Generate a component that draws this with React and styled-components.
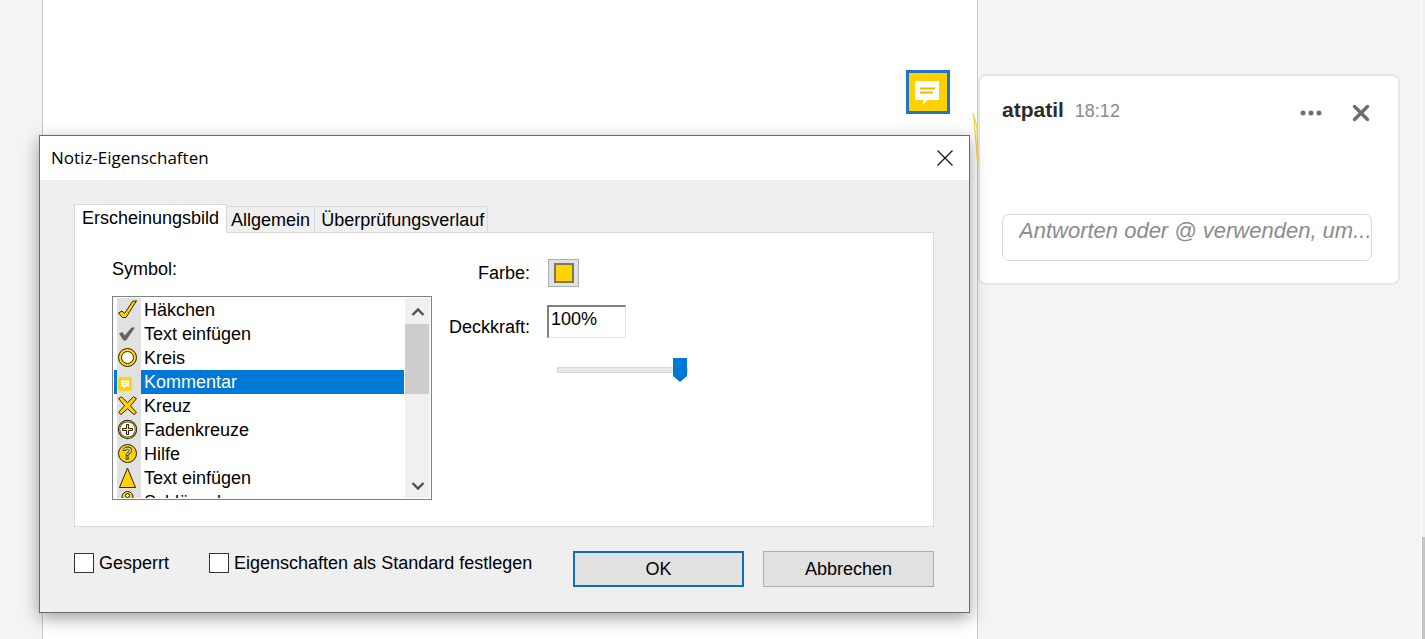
import { useState } from "react";
import styled, { createGlobalStyle } from "styled-components";

const symbols = [
  { id: "check", label: "Häkchen" },
  { id: "insert", label: "Text einfügen" },
  { id: "circle", label: "Kreis" },
  { id: "comment", label: "Kommentar" },
  { id: "cross", label: "Kreuz" },
  { id: "crosshair", label: "Fadenkreuze" },
  { id: "help", label: "Hilfe" },
  { id: "triangle", label: "Text einfügen" },
  { id: "key", label: "Schlüssel" },
];

const tabs = ["Erscheinungsbild", "Allgemein", "Überprüfungsverlauf"];

const shapes = {
  check: (
    <path
      d="M1.5 15 L5 13 L7.5 15.5 L15.5 3.5 L19.5 2.8 L9 19.5 H5.5 Z"
      fill="#ffd400"
      stroke="#2b2300"
    />
  ),
  insert: (
    <path d="M2 11.5 L5.5 10 L7.8 13.5 L14.5 5.5 H18 L9 18.5 H6.5 Z" fill="#636363" />
  ),
  circle: (
    <>
      <circle cx="10.5" cy="11.5" r="9" fill="#ffd400" stroke="#2b2300" />
      <circle cx="10.5" cy="11.5" r="6" fill="#fff" stroke="#2b2300" />
    </>
  ),
  comment: (
    <>
      <rect x="1" y="7" width="14" height="14" rx="1" fill="#ffd21a" />
      <path d="M4 10.5 H12 V16.5 H8.5 L7 18 V16.5 H4 Z" fill="#fff" />
      <path d="M6 12.5 H10 M6 14.5 H9" stroke="#ffd95a" />
    </>
  ),
  cross: (
    <path
      d="M1.5 4.5 L4.5 2.8 L10.5 8.7 L16.5 2.8 L19.5 4.5 L13.5 11.8 L19.5 18.5 L17 20.5 L10.5 14.8 L4 20.5 L1.5 18.5 L7.5 11.8 Z"
      fill="#ffd400"
      stroke="#2b2300"
      strokeLinejoin="round"
    />
  ),
  crosshair: (
    <>
      <circle cx="10.5" cy="11.5" r="8.5" fill="#fff" stroke="#2b2300" strokeWidth="2.4" />
      <circle cx="10.5" cy="11.5" r="8.3" fill="none" stroke="#d9b300" strokeWidth="1" />
      <path
        d="M9.5 6.5 H11.5 V10.5 H15.5 V12.5 H11.5 V16.5 H9.5 V12.5 H5.5 V10.5 H9.5 Z"
        fill="#ffe680"
        stroke="#2b2300"
      />
    </>
  ),
  help: (
    <>
      <circle cx="10.5" cy="11.5" r="9" fill="#ffd400" stroke="#2b2300" />
      <text
        x="10.5"
        y="17"
        textAnchor="middle"
        fontFamily="Liberation Sans, sans-serif"
        fontSize="16"
        fontWeight="bold"
        fill="#fff"
        stroke="#2b2300"
        strokeWidth="0.8"
      >
        ?
      </text>
    </>
  ),
  triangle: (
    <path d="M10.5 2 L18.5 21.5 H2.5 Z" fill="#ffd400" stroke="#2b2300" />
  ),
  key: (
    <>
      <circle cx="10.5" cy="7" r="5.5" fill="#ffd400" stroke="#2b2300" />
      <circle cx="10.5" cy="5.5" r="2" fill="#fff" stroke="#2b2300" />
      <path d="M8.5 12 H12.5 V21 H8.5 Z" fill="#ffd400" stroke="#2b2300" />
    </>
  ),
};

function App() {
  const [activeTab, setActiveTab] = useState(tabs[0]);
  const [symbol, setSymbol] = useState("comment");
  const [opacity, setOpacity] = useState(100);

  return (
    <>
      <GlobalStyle />
      <Workspace>
        <DocumentPage>
          <NoteMarker aria-label="Notiz">
            <svg width="38" height="38" viewBox="0 0 38 38">
              <path d="M6 8 H30 V27 H18.5 L14 32 V27 H6 Z" fill="#fff" />
              <path d="M11 15.5 H26 M11 19.5 H24" stroke="#e9b800" strokeWidth="2" />
            </svg>
          </NoteMarker>
        </DocumentPage>

        <Comments>
          <CommentCard>
            <CommentHeader>
              <Author>atpatil</Author>
              <Time>18:12</Time>
              <CardActions>
                <IconButton aria-label="Optionen">
                  <svg width="22" height="22" viewBox="0 0 22 22" fill="#6e6e6e">
                    <circle cx="3" cy="11" r="2.5" />
                    <circle cx="11" cy="11" r="2.5" />
                    <circle cx="19" cy="11" r="2.5" />
                  </svg>
                </IconButton>
                <IconButton aria-label="Schließen">
                  <svg width="18" height="18" viewBox="0 0 18 18">
                    <path
                      d="M2.5 2.5 L15.5 15.5 M15.5 2.5 L2.5 15.5"
                      stroke="#6e6e6e"
                      strokeWidth="3.4"
                      strokeLinecap="round"
                    />
                  </svg>
                </IconButton>
              </CardActions>
            </CommentHeader>
            <ReplyInput
              aria-label="Antwort"
              placeholder="Antworten oder @ verwenden, um..."
            />
          </CommentCard>
        </Comments>

        <Scroller>
          <ScrollerThumb />
        </Scroller>

        <Connector width="8" height="56" viewBox="0 0 8 56">
          <path
            d="M1 1 L6 19 M1.5 2 L6 54 M5 15 L6 54"
            fill="none"
            stroke="#f5d13c"
            strokeWidth="1.2"
          />
        </Connector>

        <Dialog role="dialog" aria-labelledby="dialog-title">
          <TitleBar>
            <Title id="dialog-title">Notiz-Eigenschaften</Title>
            <IconButton aria-label="Dialog schließen">
              <svg width="16" height="16" viewBox="0 0 16 16">
                <path d="M0.5 0.5 L15.5 15.5 M15.5 0.5 L0.5 15.5" stroke="#111" strokeWidth="1.2" />
              </svg>
            </IconButton>
          </TitleBar>

          <DialogBody>
            <TabList role="tablist">
              {tabs.map((tab) => (
                <Tab
                  key={tab}
                  role="tab"
                  aria-selected={activeTab === tab}
                  $active={activeTab === tab}
                  onClick={() => setActiveTab(tab)}
                >
                  {tab}
                </Tab>
              ))}
            </TabList>

            <Panel role="tabpanel">
              <SymbolField>
                <span id="symbol-label">Symbol:</span>
                <ListBox>
                  <Options role="listbox" aria-labelledby="symbol-label">
                    {symbols.map((item) => (
                      <Option
                        key={item.id}
                        role="option"
                        aria-selected={symbol === item.id}
                        $selected={symbol === item.id}
                        onClick={() => setSymbol(item.id)}
                      >
                        <IconCell>
                          <svg width="24" height="24" viewBox="0 0 24 24">
                            {shapes[item.id]}
                          </svg>
                        </IconCell>
                        {item.label}
                      </Option>
                    ))}
                  </Options>
                  <ListScrollbar>
                    <ScrollButton aria-label="Nach oben">
                      <svg width="14" height="10" viewBox="0 0 14 10">
                        <path d="M1.5 8 L7 2.5 L12.5 8" fill="none" stroke="#505050" strokeWidth="2.4" />
                      </svg>
                    </ScrollButton>
                    <ListThumb />
                    <ScrollButton aria-label="Nach unten">
                      <svg width="14" height="10" viewBox="0 0 14 10">
                        <path d="M1.5 2 L7 7.5 L12.5 2" fill="none" stroke="#505050" strokeWidth="2.4" />
                      </svg>
                    </ScrollButton>
                  </ListScrollbar>
                </ListBox>
              </SymbolField>

              <Settings>
                <label htmlFor="color">Farbe:</label>
                <ColorButton id="color">
                  <Swatch />
                </ColorButton>
                <OpacityLabel htmlFor="opacity">Deckkraft:</OpacityLabel>
                <OpacityInput id="opacity" value={`${opacity}%`} readOnly />
                <Slider
                  type="range"
                  min="0"
                  max="100"
                  aria-label="Deckkraft"
                  value={opacity}
                  onChange={(e) => setOpacity(e.target.value)}
                />
              </Settings>
            </Panel>

            <Footer>
              <CheckLabel>
                <Checkbox type="checkbox" />
                Gesperrt
              </CheckLabel>
              <CheckLabel>
                <Checkbox type="checkbox" />
                Eigenschaften als Standard festlegen
              </CheckLabel>
              <Buttons>
                <Button $primary>OK</Button>
                <Button>Abbrechen</Button>
              </Buttons>
            </Footer>
          </DialogBody>
        </Dialog>
      </Workspace>
    </>
  );
}

const GlobalStyle = createGlobalStyle`
  * {
    box-sizing: border-box;
  }
  body {
    margin: 0;
    background: #f4f4f4;
    color: #000;
    font-family: "Liberation Sans", Arial, sans-serif;
    font-size: 18px;
    line-height: 24px;
  }
  button,
  input {
    font: inherit;
    color: inherit;
  }
  svg {
    display: block;
  }
`;

const Workspace = styled.div`
  position: relative;
  display: grid;
  grid-template-columns: 1fr 443px 4px;
  min-height: 100vh;
  padding-left: 42px;
  overflow: hidden;
`;

const DocumentPage = styled.main`
  display: flex;
  justify-content: flex-end;
  align-items: flex-start;
  padding: 70px 27px 0 0;
  background: #fff;
  border: solid #c8c8c8;
  border-width: 0 1px;
`;

const NoteMarker = styled.button`
  padding: 0;
  background: #ffd100;
  border: 3px solid #2473bd;
`;

const Comments = styled.aside`
  padding: 74px 21px 0 0;
`;

const CommentCard = styled.article`
  padding: 24px 26px 22px 22px;
  background: #fff;
  border: 2px solid #e6e6e6;
  border-radius: 8px;
`;

const CommentHeader = styled.header`
  display: flex;
  align-items: center;
  height: 24px;
  margin-bottom: 90px;
`;

const Author = styled.strong`
  margin: 0 11px 4px 0;
  color: #2c2c2c;
  font-size: 21px;
`;

const Time = styled.time`
  margin-bottom: 2px;
  color: #8a8a8a;
`;

const CardActions = styled.div`
  display: flex;
  align-items: center;
  gap: 30px;
  margin: 2px 2px 0 auto;
`;

const IconButton = styled.button`
  padding: 0;
  background: none;
  border: 0;
`;

const ReplyInput = styled.input`
  display: block;
  width: 100%;
  height: 47px;
  padding: 0 0 14px 16px;
  background: #fff;
  border: 1px solid #d9d9d9;
  border-radius: 7px;
  font-size: 22px;
  font-style: italic;

  &::placeholder {
    color: #8c8c8c;
  }
`;

const Scroller = styled.div`
  display: flex;
  align-items: flex-end;
  background: #f0f0f0;
  border-left: 1px solid #fff;
`;

const ScrollerThumb = styled.div`
  width: 100%;
  height: 102px;
  background: #c4c4c4;
`;

/* line from the note to its comment card */
const Connector = styled.svg`
  position: absolute;
  top: 112px;
  right: 445px;
`;

const Dialog = styled.section`
  position: absolute;
  top: 135px;
  left: 39px;
  right: 455px;
  background: #efefef;
  border: 1px solid #6b6b6b;
  box-shadow: 0 5px 16px rgba(0, 0, 0, 0.38);
`;

const TitleBar = styled.header`
  display: flex;
  align-items: center;
  justify-content: space-between;
  height: 44px;
  padding: 0 16px 0 11px;
  background: #fff;
`;

const Title = styled.h1`
  margin: 0;
  font-family: "Open Sans", "Noto Sans", sans-serif;
  font-size: 17px;
  font-weight: 400;
`;

const DialogBody = styled.div`
  padding: 24px 35px 25px 34px;
`;

const TabList = styled.div`
  display: flex;
  align-items: flex-end;
`;

const Tab = styled.button`
  height: ${(props) => (props.$active ? 29 : 26)}px;
  margin-bottom: ${(props) => (props.$active ? -1 : 0)}px;
  padding: ${(props) => (props.$active ? "0 7px 2px" : "0 4px")};
  background: ${(props) => (props.$active ? "#fff" : "#efefef")};
  border: 1px solid #d9d9d9;
  border-bottom: 0;
  border-left-width: ${(props) => (props.$active ? 1 : 0)}px;

  &:last-child {
    padding: 0 3px 0 6px;
  }
`;

const Panel = styled.div`
  display: flex;
  align-items: flex-start;
  gap: 17px;
  min-height: 295px;
  padding: 24px 37px;
  background: #fff;
  border: 1px solid #d9d9d9;
`;

const SymbolField = styled.div`
  display: flex;
  flex-direction: column;
  gap: 15px;
  width: 320px;
`;

const ListBox = styled.div`
  display: flex;
  height: 204px;
  padding: 1px;
  border: 1px solid #7d8087;
`;

const Options = styled.ul`
  flex: 1;
  margin: 0;
  padding: 0;
  overflow: hidden;
  list-style: none;
`;

const Option = styled.li`
  display: flex;
  align-items: center;
  gap: 3px;
  height: 24px;
  padding-left: 3px;
  background: ${(props) => (props.$selected ? "#0078d7" : "#fff")};
  color: ${(props) => (props.$selected ? "#fff" : "#000")};
`;

const IconCell = styled.span`
  width: 24px;
  height: 24px;
  background: #e1e1e1;
`;

const ListScrollbar = styled.div`
  display: flex;
  flex-direction: column;
  width: 25px;
  margin-left: 1px;
  background: #f0f0f0;
`;

const ScrollButton = styled.button`
  display: flex;
  align-items: center;
  justify-content: center;
  height: 26px;
  padding: 2px 0 0;
  background: none;
  border: 0;

  &:last-child {
    margin-top: auto;
  }
`;

const ListThumb = styled.div`
  width: 24px;
  height: 70px;
  background: #cdcdcd;
`;

const Settings = styled.div`
  display: grid;
  grid-template-columns: 81px 140px;
  grid-template-rows: 28px 33px 24px;
  align-items: center;
  gap: 18px 17px;
  padding-top: 2px;
  text-align: right;
`;

const ColorButton = styled.button`
  display: flex;
  align-items: center;
  justify-content: center;
  width: 31px;
  height: 28px;
  margin-left: 1px;
  padding: 0;
  background: #e1e1e1;
  border: 1px solid #adadad;
`;

const Swatch = styled.span`
  width: 20px;
  height: 20px;
  background: #ffd400;
  border: 2px solid #80765a;
`;

const OpacityLabel = styled.label`
  padding-top: 10px;
`;

const OpacityInput = styled.input`
  width: 79px;
  height: 33px;
  padding: 0 0 5px 2px;
  background: #fff;
  border: solid;
  border-width: 2px 1px 1px 2px;
  border-color: #808080 #e3e3e3 #e3e3e3 #808080;
`;

const Slider = styled.input`
  grid-column: 2;
  width: 131px;
  height: 24px;
  margin: 4px 0 0 10px;
  appearance: none;
  background: none;

  &::-webkit-slider-runnable-track {
    height: 6px;
    background: #e7eaea;
    border: 1px solid #d6d6d6;
  }
  &::-webkit-slider-thumb {
    width: 14px;
    height: 24px;
    margin-top: -10px;
    appearance: none;
    background: #0078d7;
    clip-path: polygon(0 0, 100% 0, 100% 75%, 50% 100%, 0 75%);
  }
`;

const Footer = styled.footer`
  display: flex;
  align-items: flex-start;
  gap: 40px;
  padding-top: 24px;
`;

const CheckLabel = styled.label`
  display: flex;
  align-items: center;
  gap: 5px;
  white-space: nowrap;
`;

const Checkbox = styled.input`
  width: 20px;
  height: 20px;
  margin: 0;
  appearance: none;
  background: #fff;
  border: 1px solid #333;

  &:checked {
    background: #0078d7;
  }
`;

const Buttons = styled.div`
  display: flex;
  gap: 19px;
  margin-left: auto;
`;

const Button = styled.button`
  width: 171px;
  height: 36px;
  padding: 0;
  background: #e1e1e1;
  border: ${(props) =>
    props.$primary ? "2px solid #0f6fbd" : "1px solid #adadad"};
`;

export default App;
